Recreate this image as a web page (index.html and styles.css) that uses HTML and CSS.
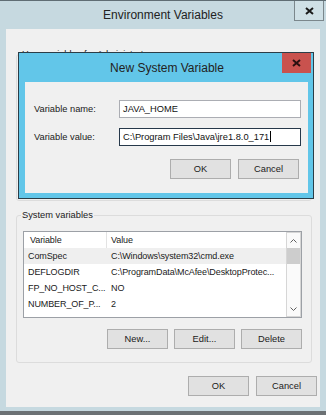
FILE: index.html
```html
<!DOCTYPE html>
<html lang="en">

<head>
    <meta charset="UTF-8">
    <title>Environment Variables</title>
    <link rel="stylesheet" href="styles.css">
</head>

<body>
    <div class="window">
        <div class="titlebar">
            <div class="title">Environment Variables</div>
            <div class="close-btn">
                <svg width="9" height="8" viewBox="0 0 9 8"><path d="M1 1L8 7M8 1L1 7" stroke="#1b1b1b" stroke-width="2"/></svg>
            </div>
        </div>

        <div class="client">
            <fieldset class="group user-group">
                <legend>User variables for Administrator</legend>
            </fieldset>

            <!-- modal on top of the user variables group -->
            <div class="dialog">
                <div class="dialog-bar">
                    <div class="title">New System Variable</div>
                    <div class="red-btn">
                        <svg width="9" height="8" viewBox="0 0 9 8"><path d="M1 1L8 7M8 1L1 7" stroke="#2a1010" stroke-width="2"/></svg>
                    </div>
                </div>
                <div class="dialog-body">
                    <div class="form-row">
                        <label>Variable name:</label>
                        <div class="field">JAVA_HOME</div>
                    </div>
                    <div class="form-row">
                        <label>Variable value:</label>
                        <div class="field focused">C:\Program Files\Java\jre1.8.0_171<span class="caret"></span></div>
                    </div>
                    <div class="btn-row dialog-btns">
                        <button>OK</button>
                        <button>Cancel</button>
                    </div>
                </div>
            </div>

            <fieldset class="group sys-group">
                <legend>System variables</legend>
                <div class="list">
                    <div class="rows">
                        <div class="row head"><span class="c1">Variable</span><span class="c2">Value</span></div>
                        <div class="row hot"><span class="c1">ComSpec</span><span class="c2">C:\Windows\system32\cmd.exe</span></div>
                        <div class="row"><span class="c1">DEFLOGDIR</span><span class="c2">C:\ProgramData\McAfee\DesktopProtec...</span></div>
                        <div class="row"><span class="c1">FP_NO_HOST_C...</span><span class="c2">NO</span></div>
                        <div class="row"><span class="c1">NUMBER_OF_P...</span><span class="c2">2</span></div>
                    </div>
                    <div class="scrollbar">
                        <div class="arrow">
                            <svg width="7" height="4" viewBox="0 0 7 4"><path d="M0.5 3.5L3.5 0.5L6.5 3.5" fill="none" stroke="#606060"/></svg>
                        </div>
                        <div class="thumb"></div>
                        <div class="track"></div>
                        <div class="arrow">
                            <svg width="7" height="4" viewBox="0 0 7 4"><path d="M0.5 0.5L3.5 3.5L6.5 0.5" fill="none" stroke="#606060"/></svg>
                        </div>
                    </div>
                </div>
                <div class="btn-row list-btns">
                    <button>New...</button>
                    <button>Edit...</button>
                    <button>Delete</button>
                </div>
            </fieldset>

            <div class="btn-row footer">
                <button>OK</button>
                <button>Cancel</button>
            </div>
        </div>
    </div>
</body>

</html>
```

FILE: styles.css
```css
body {
    margin: 0;
    background-color: #6c7174;
    font-family: "Liberation Sans", Arial, sans-serif;
    font-size: 9.3px;
    color: #1a1a1a;
}

.window {
    width: 326px;
    height: 411px;
    box-sizing: border-box;
    background-color: #c6d9e0;
    border-top: 1px solid #5f6d74;
}

/* title bars: centered title, button on the right */
.titlebar,
.dialog-bar {
    display: grid;
    grid-template-columns: 1fr auto 1fr;
    align-items: start;
}

.title {
    grid-column: 2;
    font-size: 12px;
    color: #222;
    white-space: nowrap;
}

.titlebar {
    height: 28px;
}

.titlebar .title {
    line-height: 28px;
}

.close-btn {
    grid-column: 3;
    justify-self: end;
    width: 28px;
    height: 19px;
    margin-right: 2px;
    border: 1px solid #7b878c;
    border-top: 0;
    background-color: #cfe0e6;
    display: flex;
    align-items: center;
    justify-content: center;
}

.client {
    position: relative;
    height: 378px;
    margin: 0 6px;
    padding: 0 8px 0 10px;
    box-sizing: border-box;
    background-color: #f0f0f0;
    display: flex;
    flex-direction: column;
}

.group {
    margin: 0;
    padding: 0 9px 0 6px;
    border: 1px solid #dcdcdc;
    border-radius: 3px;
    box-sizing: border-box;
    min-width: 0;
}

.group legend {
    padding: 0 1px;
    margin-left: -2px;
    line-height: 14px;
}

.user-group {
    margin-top: 18px;
    height: 154px;
}

.sys-group {
    margin-top: 7px;
    height: 155px;
}

/* New System Variable */
.dialog {
    position: absolute;
    left: 12px;
    top: 23px;
    width: 296px;
    height: 147px;
    box-sizing: border-box;
    border: 1px solid #2b3d47;
    background-color: #62c6e9;
    padding: 0 5px 5px 6px;
    display: flex;
    flex-direction: column;
}

.dialog-bar {
    height: 29px;
    margin: 0 -5px 0 -6px;
}

.dialog-bar .title {
    line-height: 30px;
    padding-left: 2px;
}

.red-btn {
    grid-column: 3;
    justify-self: end;
    width: 29px;
    height: 20px;
    margin-right: 2px;
    background-color: #c9524e;
    display: flex;
    align-items: center;
    justify-content: center;
}

.dialog-body {
    flex: 1;
    background-color: #f0f0f0;
    padding: 18px 7px 0 9px;
    display: flex;
    flex-direction: column;
    gap: 10px;
}

.form-row {
    display: flex;
    align-items: center;
}

.form-row label {
    width: 85px;
}

.field {
    width: 182px;
    height: 18px;
    box-sizing: border-box;
    border: 1px solid #abadb3;
    background-color: #fff;
    padding-left: 3px;
    line-height: 16px;
    color: #111;
    white-space: nowrap;
}

.field.focused {
    border-color: #26384a;
}

.caret {
    display: inline-block;
    width: 1px;
    height: 11px;
    margin-left: 1px;
    vertical-align: -2px;
    background-color: #000;
}

.btn-row {
    display: flex;
    justify-content: flex-end;
}

button {
    width: 61px;
    height: 20px;
    padding: 0;
    border: 1px solid #adadad;
    background-color: #e1e1e1;
    font-family: inherit;
    font-size: 9.3px;
    color: #1a1a1a;
}

.dialog-btns {
    gap: 7px;
    margin-top: 3px;
    margin-right: 2px;
}

/* list view */
.list {
    margin-top: 9px;
    height: 87px;
    box-sizing: border-box;
    border: 1px solid #9ca0a6;
    background-color: #fff;
    display: flex;
}

.rows {
    flex: 1;
    font-size: 9px;
    letter-spacing: -0.1px;
}

.row {
    display: flex;
    height: 16px;
    line-height: 16px;
    white-space: nowrap;
}

.row.hot {
    background-color: #efefef;
}

.c1 {
    flex: none;
    width: 83px;
    padding-left: 4px;
    box-sizing: border-box;
    overflow: hidden;
}

.c2 {
    padding-left: 4px;
}

.head .c1 {
    padding-left: 6px;
    border-right: 1px solid #e3e3e3;
}

.scrollbar {
    width: 15px;
    box-sizing: border-box;
    border: 1px solid #d6d6d6;
    background-color: #fafafa;
    display: flex;
    flex-direction: column;
}

.arrow {
    height: 15px;
    display: flex;
    align-items: center;
    justify-content: center;
}

.thumb {
    height: 16px;
    background-color: #cdcdcd;
}

.track {
    flex: 1;
}

.list-btns {
    gap: 6px;
    margin-top: 11px;
}

.footer {
    gap: 7px;
    margin-top: 13px;
    margin-right: -5px;
}
```
